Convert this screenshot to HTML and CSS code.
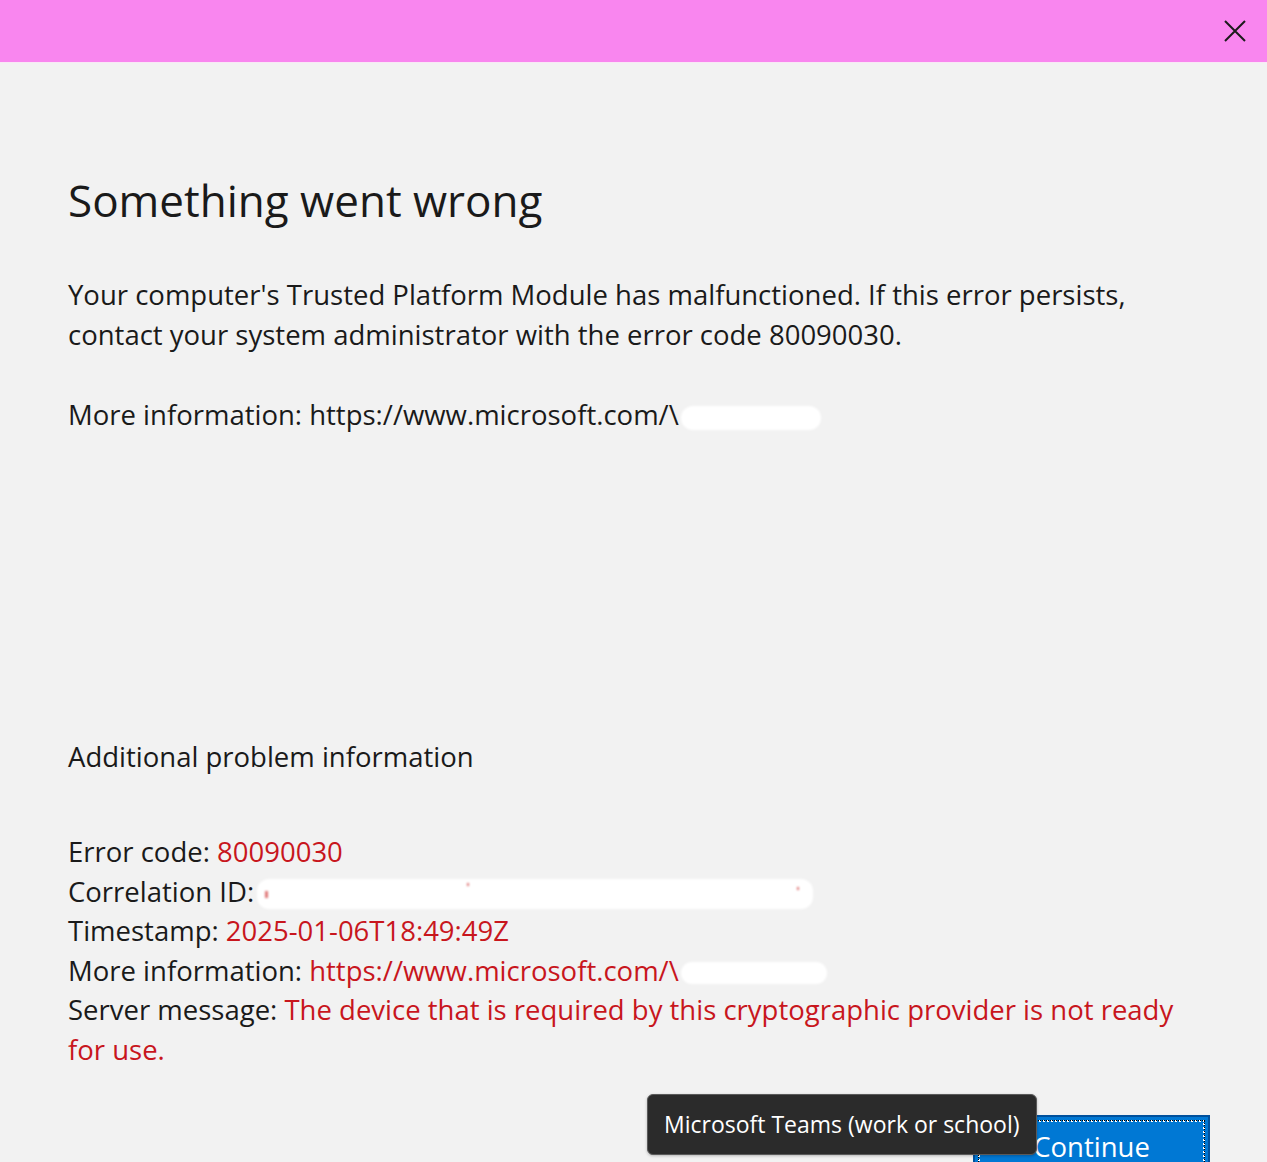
FILE: index.html
```html
<!DOCTYPE html>
<html lang="en">
<head>
<meta charset="utf-8">
<title>Something went wrong</title>
<link rel="stylesheet" href="styles.css">
</head>
<body>
<div class="window">
  <header class="titlebar">
    <button class="close" aria-label="Close">
      <svg width="22" height="22" viewBox="0 0 22 22"><path d="M1 1 L21 21 M21 1 L1 21" stroke="#1b1b1b" stroke-width="2" fill="none"/></svg>
    </button>
  </header>
  <main class="content">
    <h1 class="title">Something went wrong</h1>
    <p class="message">Your computer's Trusted Platform Module has malfunctioned. If this error persists, contact your system administrator with the error code 80090030.</p>
    <p class="line">More information: https://www.microsoft.com/\<span class="redact r1"></span></p>

    <h2 class="subtitle">Additional problem information</h2>
    <div class="details">
      <div>Error code: <span class="val">80090030</span></div>
      <div>Correlation ID: <span class="redact r2"><i class="speck s1"></i><i class="speck s2"></i><i class="speck s3"></i></span></div>
      <div>Timestamp: <span class="val">2025-01-06T18:49:49Z</span></div>
      <div>More information: <span class="val">https://www.microsoft.com/\</span><span class="redact r3"></span></div>
      <div>Server message: <span class="val">The device that is required by this cryptographic provider is not ready for use.</span></div>
    </div>
    <div class="actions">
      <button class="primary"><span class="focus">Continue</span></button>
      <div class="tooltip">Microsoft Teams (work or school)</div>
    </div>
  </main>
</div>
</body>
</html>
```
FILE: styles.css
```css
html, body {
  margin: 0;
  padding: 0;
  height: 100%;
  overflow: hidden;
}
body {
  background: #f2f2f2;
  font-family: "Open Sans", "Noto Sans", sans-serif;
  color: #1a1a1a;
}
.window {
  display: flex;
  flex-direction: column;
  height: 100%;
}
.titlebar {
  height: 62px;
  background: #f986ef;
  border-bottom: 1px solid #f9e8f6;
  display: flex;
  justify-content: flex-end;
  align-items: center;
  padding-right: 21px;
  flex: none;
}
.close {
  border: 0;
  background: transparent;
  padding: 0;
  width: 22px;
  height: 22px;
  display: flex;
}
.content {
  padding: 107px 67px 0 68px;
}
.title {
  margin: 0;
  font-weight: 400;
  font-size: 44px;
  line-height: 60px;
}
.message, .line {
  margin: 45px 0 0;
  font-size: 27.5px;
  line-height: 40px;
}
.line {
  margin-top: 40px;
}
.redact {
  display: inline-block;
  background: #ffffff;
  border-radius: 12px;
  filter: blur(1.2px);
  vertical-align: middle;
  position: relative;
}
.r1 { width: 140px; height: 24px; margin-left: 2px; }
.r2 { width: 556px; height: 30px; margin-left: -4px; }
.r3 { width: 146px; height: 22px; margin-left: 2px; }
.speck {
  position: absolute;
  background: #d23a3a;
  width: 3px;
  height: 7px;
  opacity: 0.7;
}
.s1 { left: 8px; top: 12px; }
.s2 { left: 210px; top: 4px; width: 2px; height: 3px; }
.s3 { left: 540px; top: 8px; width: 2px; height: 3px; }
.subtitle {
  margin: 302px 0 0;
  font-weight: 400;
  font-size: 27.5px;
  line-height: 40px;
}
.details {
  margin-top: 55px;
  font-size: 27.5px;
  line-height: 39.6px;
}
.val {
  color: #c8161d;
}
.actions {
  margin-top: 45px;
  display: flex;
  justify-content: flex-end;
  margin-right: -10px;
  position: relative;
}
.primary {
  width: 237px;
  height: 62px;
  background: #0078d4;
  border: 2px solid #00509c;
  padding: 3px;
  font-family: inherit;
  color: #ffffff;
  font-size: 27.5px;
}
.focus {
  display: flex;
  height: 100%;
  box-sizing: border-box;
  border: 2px dotted #ffffff;
  outline: 1px dotted #000;
  outline-offset: -1px;
  justify-content: center;
  align-items: flex-start;
  line-height: 50px;
}
.tooltip {
  position: absolute;
  left: 579px;
  top: -21px;
  width: 390px;
  height: 61px;
  box-sizing: border-box;
  background: #2b2b2b;
  border: 1px solid #5a5a5a;
  border-radius: 6px;
  color: #ffffff;
  font-size: 23px;
  line-height: 59px;
  padding-left: 16px;
  box-shadow: 0 1px 3px rgba(0,0,0,0.25);
  white-space: nowrap;
}
```
